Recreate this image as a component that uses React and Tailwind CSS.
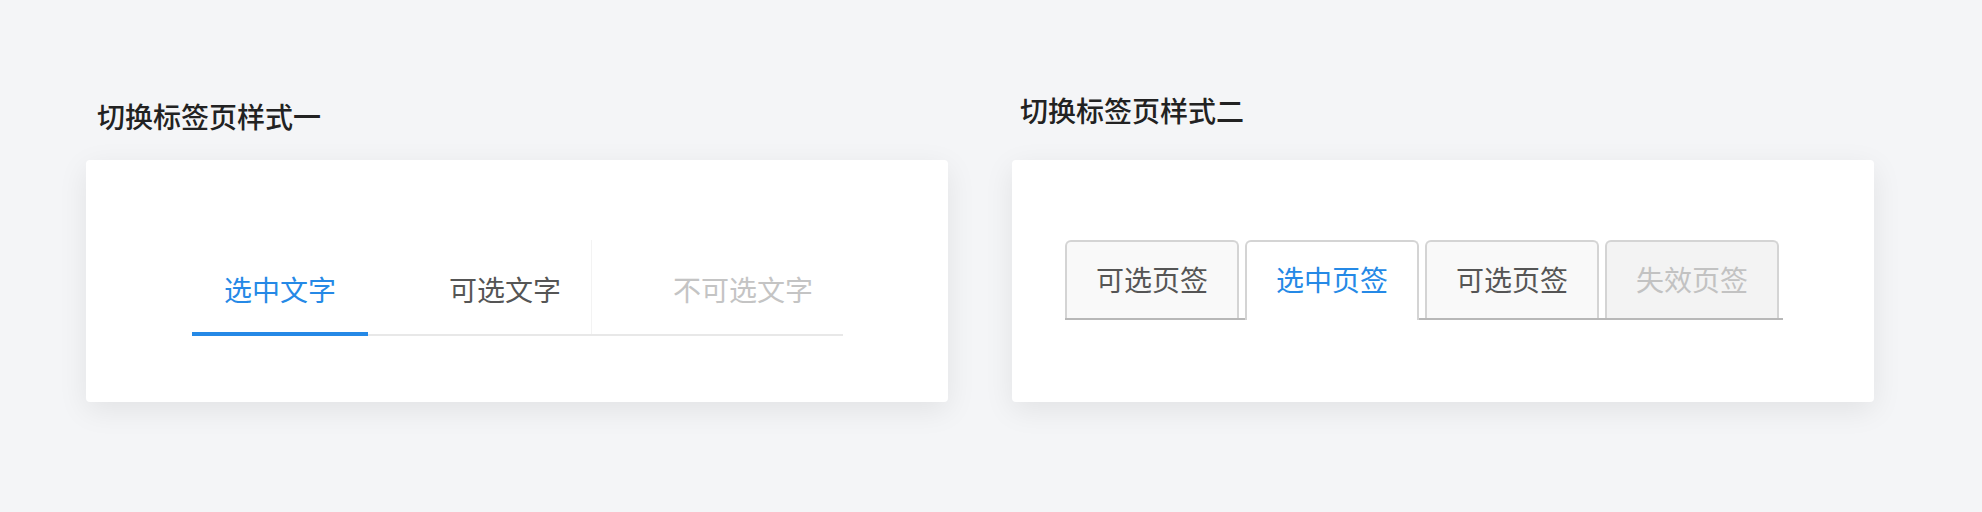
export default function App() {
  const font = { fontFamily: '"Noto Sans CJK SC", "Noto Sans", sans-serif' };

  return (
    <div className="min-h-[512px] w-full bg-[#f4f5f7] pl-[86px] flex gap-[64px]" style={font}>
      {/* 样式一 */}
      <div className="flex flex-col pt-[102px]">
        <h2 className="pl-[11px] text-[28px] leading-none font-medium text-[#222]">切换标签页样式一</h2>
        <div className="mt-[30px] w-[862px] h-[242px] bg-white rounded-[4px] shadow-[0_8px_30px_rgba(0,0,0,0.08)] pt-[80px] pl-[106px]">
          <div className="inline-flex border-b-2 border-[#e8e8e8] text-[28px] leading-none">
            <div className="px-[32px] pt-[35px] pb-[29px] -mb-[2px] border-b-4 border-[#2589e6] text-[#2589e6]">
              选中文字
            </div>
            <div className="pl-[81px] pr-[30px] pt-[35px] text-[#555]">可选文字</div>
            <div className="w-px bg-[#f3f3f3]" />
            <div className="pl-[81px] pr-[30px] pt-[35px] text-[#c4c4c4]">不可选文字</div>
          </div>
        </div>
      </div>

      {/* 样式二 */}
      <div className="flex flex-col pt-[96px]">
        <h2 className="pl-[8px] text-[28px] leading-none font-medium text-[#222]">切换标签页样式二</h2>
        <div className="mt-[36px] w-[862px] h-[242px] bg-white rounded-[4px] shadow-[0_8px_30px_rgba(0,0,0,0.08)] pt-[80px] pl-[53px]">
          <div className="inline-flex gap-[6px] pr-[4px] border-b-2 border-[#b8b8b8] text-[28px] leading-none">
            <div className="w-[174px] text-center pt-[23px] pb-[25px] border-2 border-b-0 border-[#d4d4d4] rounded-t-[6px] bg-[#f9f9f9] text-[#555]">
              可选页签
            </div>
            <div className="w-[174px] text-center pt-[23px] pb-[27px] -mb-[2px] border-2 border-b-0 border-[#d4d4d4] rounded-t-[6px] bg-white text-[#2589e6]">
              选中页签
            </div>
            <div className="w-[174px] text-center pt-[23px] pb-[25px] border-2 border-b-0 border-[#d4d4d4] rounded-t-[6px] bg-[#f9f9f9] text-[#555]">
              可选页签
            </div>
            <div className="w-[174px] text-center pt-[23px] pb-[25px] border-2 border-b-0 border-[#d4d4d4] rounded-t-[6px] bg-[#f3f3f3] text-[#c2c2c2]">
              失效页签
            </div>
          </div>
        </div>
      </div>
    </div>
  );
}
